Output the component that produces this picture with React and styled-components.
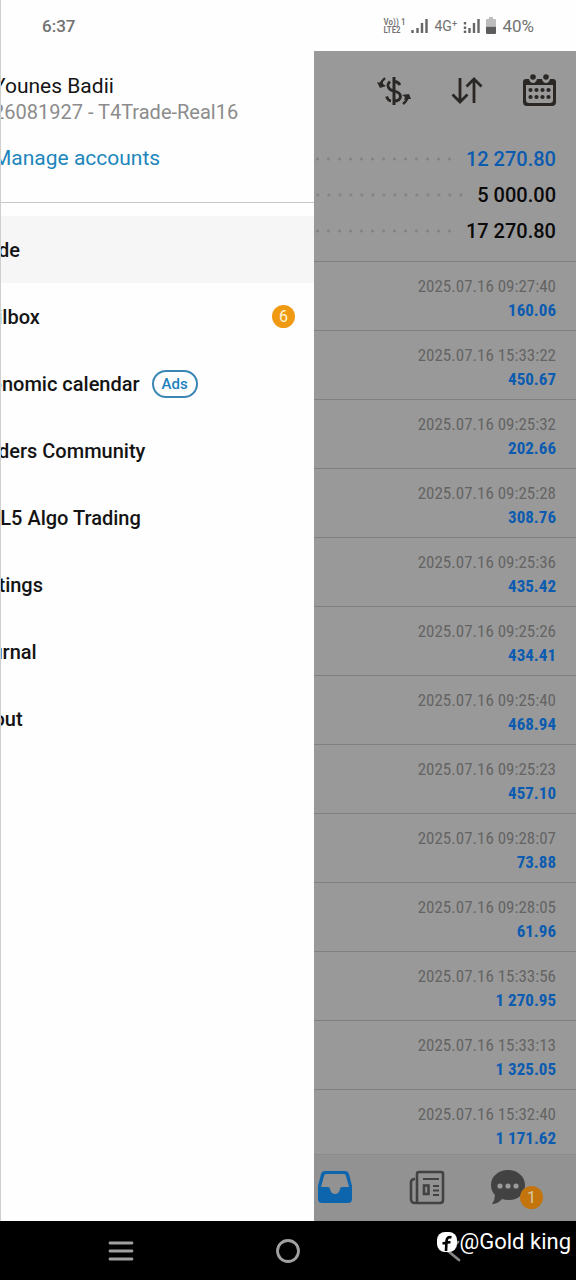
import React from "react";
import styled, { createGlobalStyle } from "styled-components";

const GlobalStyle = createGlobalStyle`
  *, *::before, *::after { box-sizing: border-box; }
  body {
    margin: 0;
    background: #fefefe;
    font-family: Roboto, "Liberation Sans", sans-serif;
    color: #141414;
  }
  button { font: inherit; color: inherit; border: 0; padding: 0; background: none; }
  svg { display: block; flex: none; }
  h1, p, dl, dt, dd, ul { margin: 0; padding: 0; }
  ul { list-style: none; }
`;

const Screen = styled.div`
  display: flex;
  flex-direction: column;
  height: 100vh;
  overflow: hidden;
`;

const StatusBar = styled.header`
  display: flex;
  justify-content: space-between;
  align-items: center;
  flex: none;
  height: 51px;
  padding: 0 42px 0 41px;
  border-left: 1px solid #cfcfcf;
  color: #727272;
  font-size: 17px;
  line-height: 20px;
`;

const Clock = styled.time`
  font-weight: 500;
`;

const StatusIcons = styled.div`
  display: flex;
  align-items: center;
  gap: 6px;
`;

const Network = styled.span`
  font-size: 14px;
`;

const VoLte = styled.span`
  display: flex;
  flex-direction: column;
  font-family: "Roboto Condensed", Roboto, sans-serif;
  font-size: 9px;
  line-height: 8px;
  font-weight: 500;
`;

const Body = styled.div`
  display: flex;
  flex: 1;
  min-height: 0;
`;

const Drawer = styled.aside`
  flex: none;
  width: 54.5%;
  overflow: hidden;
  border-left: 1px solid #cfcfcf;
  background: #fefefe;
`;

const Account = styled.section`
  padding: 22px 0 31px;
  margin-left: -8px;
  line-height: 26px;
  font-size: 20px;
  white-space: nowrap;
  border-bottom: 1px solid #c8c8c8;
`;

const AccountName = styled.h1`
  font-size: 21px;
  font-weight: 400;
`;

const AccountServer = styled.p`
  color: #8c8c8c;
`;

const ManageLink = styled.a`
  display: block;
  margin-top: 20px;
  color: #1c86bd;
  font-size: 21px;
  text-decoration: none;
`;

const Menu = styled.ul`
  padding-top: 13px;
`;

const MenuItem = styled.button`
  display: flex;
  align-items: center;
  gap: 12px;
  width: 100%;
  height: 67px;
  background: ${(p) => (p.$active ? "#f6f6f6" : "transparent")};
  font-size: 20px;
  font-weight: 500;
  white-space: nowrap;
  text-align: left;
`;

const MenuLabel = styled.span`
  margin-left: -32px;
`;

const AdsTag = styled.span`
  padding: 0 8px;
  border: 2px solid #3a87b5;
  border-radius: 14px;
  color: #1c80bd;
  font-size: 15px;
  line-height: 24px;
`;

const CountBadge = styled.span`
  display: grid;
  place-items: center;
  width: 23px;
  height: 23px;
  border-radius: 50%;
  font-size: 16px;
  font-weight: 400;
`;

const MenuBadge = styled(CountBadge)`
  margin-left: auto;
  margin-right: 19px;
  background: #f09a13;
  color: #fff4d8;
`;

const History = styled.main`
  display: flex;
  flex-direction: column;
  flex: 1;
  min-width: 0;
  background: #999;
`;

const Toolbar = styled.div`
  display: flex;
  justify-content: flex-end;
  align-items: center;
  gap: 40px;
  flex: none;
  height: 79px;
  padding: 0 20px;
  color: #2b2725;
`;

const Summary = styled.dl`
  display: flex;
  flex-direction: column;
  flex: none;
  padding: 11px 20px 12px 0;
  border-bottom: 1px solid #7f7f7f;
`;

const SummaryRow = styled.div`
  display: flex;
  align-items: center;
  gap: 11px;
  height: 36px;
`;

const Leader = styled.dt`
  flex: 1;
  height: 4px;
  background: radial-gradient(circle, #838383 1px, transparent 2px) right center / 11px 4px repeat-x;
`;

const SummaryValue = styled.dd`
  color: ${(p) => (p.$blue ? "#0b5bb0" : "#0a0a0a")};
  font-size: 20px;
  font-weight: 500;
`;

const DealList = styled.ul`
  flex: 1;
  min-height: 0;
  overflow: hidden;
`;

const Deal = styled.li`
  display: flex;
  flex-direction: column;
  align-items: flex-end;
  height: 69px;
  padding: 12px 20px 0 0;
  border-bottom: 1px solid #808080;
  font-family: "Roboto Condensed", Roboto, sans-serif;
  font-size: 17px;
  line-height: 24px;
`;

const DealTime = styled.time`
  color: #646464;
`;

const DealValue = styled.strong`
  color: #0b5bb0;
  font-weight: 700;
`;

const TabBar = styled.nav`
  display: flex;
  justify-content: space-between;
  align-items: center;
  flex: none;
  height: 67px;
  padding: 0 33px 2px 4px;
  border-top: 1px solid #8c8c8c;
  background: #929292;
`;

const NewsTab = styled.button`
  padding-left: 12px;
`;

const ChatTab = styled.button`
  position: relative;
  padding-right: 18px;
`;

const ChatBadge = styled(CountBadge)`
  position: absolute;
  right: 0;
  bottom: -4px;
  background: #c4740d;
  color: #d9c8a8;
`;

const SystemNav = styled.footer`
  position: relative;
  display: flex;
  justify-content: space-between;
  align-items: center;
  flex: none;
  height: 59px;
  padding: 0 108px;
  background: #000;
  color: #a0a0a0;
`;

const Watermark = styled.div`
  position: absolute;
  right: 5px;
  top: 8px;
  display: flex;
  align-items: center;
  gap: 2px;
  color: #fff;
  font-size: 22px;
  line-height: 26px;
`;

const totals = [
  { name: "Profit", value: "12 270.80", blue: true },
  { name: "Deposit", value: "5 000.00" },
  { name: "Balance", value: "17 270.80" },
];

const deals = [
  ["09:27:40", "160.06"],
  ["15:33:22", "450.67"],
  ["09:25:32", "202.66"],
  ["09:25:28", "308.76"],
  ["09:25:36", "435.42"],
  ["09:25:26", "434.41"],
  ["09:25:40", "468.94"],
  ["09:25:23", "457.10"],
  ["09:28:07", "73.88"],
  ["09:28:05", "61.96"],
  ["15:33:56", "1 270.95"],
  ["15:33:13", "1 325.05"],
  ["15:32:40", "1 171.62"],
];

const menu = [
  { label: "Trade", active: true },
  { label: "Mailbox", count: 6 },
  { label: "Economic calendar", ads: true },
  { label: "Traders Community" },
  { label: "MQL5 Algo Trading" },
  { label: "Settings" },
  { label: "Journal" },
  { label: "About" },
];

const Signal = ({ roaming }) => (
  <svg width="17" height="15" viewBox="0 0 17 15" fill="none" stroke="#666" strokeWidth="2.4">
    <path d={roaming ? "M6.5 15V10M11 15V5M15.5 15V1" : "M1.5 15V12M6.5 15V10M11 15V5M15.5 15V1"} />
    {roaming && <path d="M2 4v2.5M2 8.5V11M2 12.5V15" />}
  </svg>
);

const Battery = () => (
  <svg width="10" height="17" viewBox="0 0 10 17">
    <path d="M3 0h4v2h2q1 0 1 1v6H0V3q0-1 1-1h2z" fill="#bdbdbd" />
    <path d="M0 9.5h10V16q0 1-1 1H1q-1 0-1-1z" fill="#5c5c5c" />
  </svg>
);

const CurrencyIcon = () => (
  <svg width="34" height="30" viewBox="0 0 34 30" fill="none" stroke="currentColor" strokeWidth="2.8">
    <path d="M17 1v28" strokeWidth="3" />
    <path d="M23 9Q21 5.5 17 5.5M13 5.5Q10 8 11.5 11.5Q12.5 14 17 15Q23.5 16.5 23.5 20.5Q23 25 17 25M14 25Q11 24.5 9.5 20.5" />
    <path d="M3 8Q5 5 8 2M31 21Q30 25 26 28" strokeWidth="2.4" />
    <path d="M0 6l3 6 6-2-3-2 0-3-3 2zM34 23l-2-5-7 1 3 2-1 3 4-1z" fill="currentColor" stroke="none" />
  </svg>
);

const SortIcon = () => (
  <svg width="32" height="27" viewBox="0 0 32 27" fill="none" stroke="currentColor" strokeWidth="2.8">
    <path d="M9 1v24M1.5 17.5L9 25l7.5-7.5M23 26V2M15.5 9.5L23 2l7.5 7.5" />
  </svg>
);

const CalendarIcon = () => (
  <svg width="33" height="34" viewBox="0 0 33 34" fill="currentColor">
    <path fillRule="evenodd" d="M3 5h3q1 4 4 4t4-4h5q1 4 4 4t4-4h3q3 0 3 3v20q0 4-4 4H4q-4 0-4-4V8q0-3 3-3zM3 11v15q0 3 3 3h21q3 0 3-3V11z" />
    <circle cx="10" cy="3" r="2.8" />
    <circle cx="23" cy="3" r="2.8" />
    {[16, 23].map((y) => [8, 14, 20, 26].map((x) => <circle key={x + y * 40} cx={x - 0.5} cy={y} r="2.1" />))}
  </svg>
);

const TrayIcon = () => (
  <svg width="34" height="32" viewBox="0 0 34 32">
    <path fill="#0d65ae" fillRule="evenodd" d="M7 0h20q3 0 4 3l3 12v13q0 4-4 4H4q-4 0-4-4V15L3 3q1-3 4-3zM8 3Q6.5 3 6 5L3 16H10Q12 16 12 18Q13 23 17 23T22 18Q22 16 24 16H31L28 5Q27.5 3 26 3z" />
  </svg>
);

const NewsIcon = () => (
  <svg width="36" height="35" viewBox="0 0 36 35" fill="none" stroke="#424242" strokeWidth="2.6">
    <path d="M10 2h22q2 0 2 2v26q0 3-3 3H6q-4 0-4-4V12q0-3 4-3M8 33V4q0-2 2-2" strokeLinejoin="round" />
    <path d="M14 9h16M24 16h6M24 20.5h6M24 25h6" strokeWidth="2.2" />
    <rect x="15" y="15.5" width="4.5" height="8.5" strokeWidth="2.6" />
  </svg>
);

const ChatIcon = () => (
  <svg width="34" height="36" viewBox="0 0 34 36">
    <path fill="#424242" d="M17 1C26 1 34 7 34 16S27 31 18 31Q14 31 11 30Q7 35 1 35Q4 31 4 26Q0 22 0 16C0 7 8 1 17 1z" />
    {[9, 17, 25].map((x) => <circle key={x} cx={x} cy="17" r="2.6" fill="#999" />)}
  </svg>
);

export default function App() {
  return (
    <Screen>
      <GlobalStyle />
      <StatusBar>
        <Clock>6:37</Clock>
        <StatusIcons>
          <VoLte><span>Vo)) 1</span><span>LTE2</span></VoLte>
          <Signal />
          <Network>4G⁺</Network>
          <Signal roaming />
          <Battery />
          <span>40%</span>
        </StatusIcons>
      </StatusBar>

      <Body>
        <Drawer>
          <Account>
            <AccountName>Younes Badii</AccountName>
            <AccountServer>26081927 - T4Trade-Real16</AccountServer>
            <ManageLink href="#accounts">Manage accounts</ManageLink>
          </Account>
          <Menu>
            {menu.map((item) => (
              <li key={item.label}>
                <MenuItem type="button" $active={item.active}>
                  <MenuLabel>{item.label}</MenuLabel>
                  {item.ads && <AdsTag>Ads</AdsTag>}
                  {item.count && <MenuBadge>{item.count}</MenuBadge>}
                </MenuItem>
              </li>
            ))}
          </Menu>
        </Drawer>

        <History>
          <Toolbar>
            <button type="button" aria-label="Currency"><CurrencyIcon /></button>
            <button type="button" aria-label="Sort"><SortIcon /></button>
            <button type="button" aria-label="Period"><CalendarIcon /></button>
          </Toolbar>
          <Summary>
            {totals.map((t) => (
              <SummaryRow key={t.name}>
                <Leader aria-label={t.name} />
                <SummaryValue $blue={t.blue}>{t.value}</SummaryValue>
              </SummaryRow>
            ))}
          </Summary>
          <DealList>
            {deals.map(([time, value]) => (
              <Deal key={time}>
                <DealTime>2025.07.16 {time}</DealTime>
                <DealValue>{value}</DealValue>
              </Deal>
            ))}
          </DealList>
          <TabBar>
            <button type="button" aria-label="History"><TrayIcon /></button>
            <NewsTab type="button" aria-label="News"><NewsIcon /></NewsTab>
            <ChatTab type="button" aria-label="Messages">
              <ChatIcon />
              <ChatBadge>1</ChatBadge>
            </ChatTab>
          </TabBar>
        </History>
      </Body>

      <SystemNav>
        <button type="button" aria-label="Recent apps">
          <svg width="26" height="20" viewBox="0 0 26 20" stroke="currentColor" strokeWidth="2.8" strokeLinecap="round">
            <path d="M2 2h22M2 10h22M2 18h22" />
          </svg>
        </button>
        <button type="button" aria-label="Home">
          <svg width="24" height="24" viewBox="0 0 24 24" fill="none" stroke="currentColor" strokeWidth="2.8">
            <circle cx="12" cy="12" r="10.5" />
          </svg>
        </button>
        <button type="button" aria-label="Back">
          <svg width="26" height="22" viewBox="0 0 26 22" fill="none" stroke="#858585" strokeWidth="2.8" strokeLinecap="round">
            <path d="M16 2L6 11l11 9" />
          </svg>
        </button>
        <Watermark>
          <svg width="20" height="20" viewBox="0 0 20 20">
            <rect width="20" height="20" rx="8" fill="#fff" />
            <path d="M14.5 5.5Q10 4 9.5 9L9 19M5.5 11.5L13.5 10" fill="none" stroke="#000" strokeWidth="2.6" />
          </svg>
          <span>@Gold king</span>
        </Watermark>
      </SystemNav>
    </Screen>
  );
}
